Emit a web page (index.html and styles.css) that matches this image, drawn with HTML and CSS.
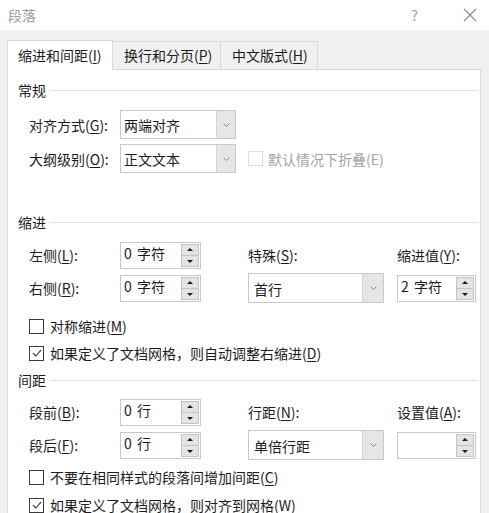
FILE: index.html
```html
<!DOCTYPE html>
<html lang="zh-CN">
<head>
<meta charset="utf-8">
<title>段落</title>
<link rel="stylesheet" href="styles.css">
</head>
<body>
<div class="dialog">
  <div class="titlebar">
    <span class="title">段落</span>
    <span class="help">?</span>
    <span class="close"><svg width="14" height="14" viewBox="0 0 14 14"><path d="M1 1L13 13M13 1L1 13" stroke="#8a8a8a" stroke-width="1.1" fill="none"/></svg></span>
  </div>
  <div class="tabs">
    <div class="tab active">缩进和间距(<u>I</u>)</div>
    <div class="tab t2">换行和分页(<u>P</u>)</div>
    <div class="tab t3">中文版式(<u>H</u>)</div>
  </div>
  <div class="panel">
    <div class="section-head"><span>常规</span><i class="rule"></i></div>
    <div class="row general r1">
      <span class="label">对齐方式(<u>G</u>):</span>
      <div class="select w116"><span class="val">两端对齐</span><span class="drop"><svg width="7" height="4" viewBox="0 0 7 4"><path d="M0.5 0.5L3.5 3.5L6.5 0.5" stroke="#8a8a8a" fill="none"/></svg></span></div>
    </div>
    <div class="row general r2">
      <span class="label">大纲级别(<u>O</u>):</span>
      <div class="select w116"><span class="val">正文文本</span><span class="drop"><svg width="7" height="4" viewBox="0 0 7 4"><path d="M0.5 0.5L3.5 3.5L6.5 0.5" stroke="#8a8a8a" fill="none"/></svg></span></div>
      <span class="check disabled"><span class="box"></span><span>默认情况下折叠(E)</span></span>
    </div>

    <div class="section-head s2"><span>缩进</span><i class="rule"></i></div>
    <div class="grid g1">
      <span class="label">左侧(<u>L</u>):</span>
      <div class="spin"><span class="val">0 字符</span><span class="btns"><span class="up"></span><span class="down"></span></span></div>
      <span></span>
      <span class="label">特殊(<u>S</u>):</span>
      <span></span>
      <span class="label">缩进值(<u>Y</u>):</span>
    </div>
    <div class="grid g2">
      <span class="label">右侧(<u>R</u>):</span>
      <div class="spin"><span class="val">0 字符</span><span class="btns"><span class="up"></span><span class="down"></span></span></div>
      <span></span>
      <div class="select tall"><span class="val">首行</span><span class="drop"><svg width="7" height="4" viewBox="0 0 7 4"><path d="M0.5 0.5L3.5 3.5L6.5 0.5" stroke="#8a8a8a" fill="none"/></svg></span></div>
      <span></span>
      <div class="spin"><span class="val">2 字符</span><span class="btns"><span class="up"></span><span class="down"></span></span></div>
    </div>
    <div class="check c1"><span class="box"></span><span>对称缩进(<u>M</u>)</span></div>
    <div class="check c2"><span class="box"><svg width="12" height="12" viewBox="0 0 12 12"><path d="M2 6.2L4.8 9L10.2 2.8" stroke="#333" stroke-width="1.1" fill="none"/></svg></span><span>如果定义了文档网格，则自动调整右缩进(<u>D</u>)</span></div>

    <div class="section-head s3"><span>间距</span><i class="rule"></i></div>
    <div class="grid g3">
      <span class="label">段前(<u>B</u>):</span>
      <div class="spin"><span class="val">0 行</span><span class="btns"><span class="up"></span><span class="down"></span></span></div>
      <span></span>
      <span class="label">行距(<u>N</u>):</span>
      <span></span>
      <span class="label">设置值(<u>A</u>):</span>
    </div>
    <div class="grid g4">
      <span class="label">段后(<u>F</u>):</span>
      <div class="spin"><span class="val">0 行</span><span class="btns"><span class="up"></span><span class="down"></span></span></div>
      <span></span>
      <div class="select tall"><span class="val">单倍行距</span><span class="drop"><svg width="7" height="4" viewBox="0 0 7 4"><path d="M0.5 0.5L3.5 3.5L6.5 0.5" stroke="#8a8a8a" fill="none"/></svg></span></div>
      <span></span>
      <div class="spin"><span class="val"></span><span class="btns"><span class="up"></span><span class="down"></span></span></div>
    </div>
    <div class="check c3"><span class="box"></span><span>不要在相同样式的段落间增加间距(<u>C</u>)</span></div>
    <div class="check c4"><span class="box"><svg width="12" height="12" viewBox="0 0 12 12"><path d="M2 6.2L4.8 9L10.2 2.8" stroke="#333" stroke-width="1.1" fill="none"/></svg></span><span>如果定义了文档网格，则对齐到网格(<u>W</u>)</span></div>
  </div>
</div>
</body>
</html>
```

FILE: styles.css
```css
* { box-sizing: border-box; }
html, body {
  margin: 0;
  padding: 0;
  width: 489px;
  height: 513px;
  overflow: hidden;
  background: #f0f0f0;
  font-family: "Noto Sans CJK SC", "Noto Sans", sans-serif;
  font-size: 14px;
  color: #1b1b1b;
}
u { text-decoration: underline; text-underline-offset: 2px; text-decoration-thickness: 1px; }

.titlebar {
  height: 30px;
  background: #ffffff;
  display: flex;
  align-items: center;
  padding-left: 8px;
}
.title { color: #9b9b9b; font-size: 14px; line-height: 20px; }
.help { margin-left: auto; color: #a0a0a0; font-size: 14px; margin-right: 45px; line-height: 20px; }
.close { width: 14px; height: 14px; margin-right: 12px; display: flex; }

.tabs {
  display: flex;
  align-items: flex-end;
  padding-left: 7px;
  margin-top: 10px;
  height: 29px;
  position: relative;
  z-index: 1;
}
.tab {
  height: 28px;
  border: 1px solid #d9d9d9;
  border-bottom: none;
  background: #f0f0f0;
  line-height: 27px;
  padding-left: 11px;
  margin-left: -1px;
}
.tab:first-child { margin-left: 0; }
.tab.active {
  height: 30px;
  margin-bottom: -1px;
  background: #ffffff;
  width: 106px;
  line-height: 29px;
  padding-left: 10px;
}
.tab.t2 { width: 109px; }
.tab.t3 { width: 98px; }

.panel {
  margin-left: 7px;
  width: 474px;
  height: 444px;
  background: #ffffff;
  border: 1px solid #d9d9d9;
  border-bottom: none;
  padding: 10px 2px 0 10px;
}

.section-head {
  display: flex;
  align-items: center;
  height: 20px;
  line-height: 20px;
}
.section-head .rule {
  flex: 1;
  height: 1px;
  background: #e3e3e3;
  margin-left: 4px;
}
.section-head.s2 { margin-top: 39px; }
.section-head.s3 { margin-top: 7px; }

.row { display: flex; align-items: center; padding-left: 11px; }
.row.r1 { margin-top: 10px; height: 29px; }
.row.r2 { margin-top: 5px; height: 29px; }
.row.general .label { width: 91px; }

.label { line-height: 20px; white-space: nowrap; }

.select {
  height: 29px;
  border: 1px solid #c8c8c8;
  display: flex;
  align-items: center;
  background: #fff;
  position: relative;
}
.select .val { padding-left: 3px; flex: 1; line-height: 20px; }
.select .drop {
  width: 19px;
  height: 27px;
  background: #e6e6e6;
  border-left: 1px solid #d4d4d4;
  display: flex;
  align-items: center;
  justify-content: center;
}
.select.w116 { width: 116px; }
.select.tall { width: 136px; height: 30px; }
.select.tall .drop { width: 21px; height: 28px; }
.select.tall .val { padding-top: 2px; padding-left: 5px; }

.check { display: flex; align-items: center; height: 20px; line-height: 20px; white-space: nowrap; }
.check .box {
  width: 15px;
  height: 15px;
  border: 1px solid #3a3a3a;
  margin-right: 6px;
  display: flex;
  align-items: center;
  justify-content: center;
  background: #fff;
}
.check.disabled { margin-left: 12px; color: #a3a3a3; }
.check.disabled .box { border-color: #dedede; margin-right: 5px; }

.grid {
  display: grid;
  grid-template-columns: 91px 81px 47px 136px 13px 79px;
  align-items: center;
  padding-left: 11px;
}
.grid.g1 { margin-top: 9px; height: 28px; }
.grid.g2 { margin-top: 4px; height: 30px; }
.grid.g3 { margin-top: 8px; height: 28px; }
.grid.g4 { margin-top: 4px; height: 30px; }

.spin {
  height: 27px;
  border: 1px solid #c8c8c8;
  display: flex;
  background: #fff;
}
.spin .val { flex: 1; padding-left: 3px; line-height: 20px; padding-top: 0; word-spacing: 2px; }
.spin .btns {
  width: 19px;
  display: flex;
  flex-direction: column;
  padding: 1px 1px 1px 0;
}
.spin .up, .spin .down {
  flex: 1;
  background: #e4e4e4;
  border: 1px solid #c4c4c4;
  position: relative;
}
.spin .down { margin-top: -1px; }
.spin .up::after, .spin .down::after {
  content: "";
  position: absolute;
  left: 50%;
  top: 50%;
  margin-left: -3px;
  border-left: 3px solid transparent;
  border-right: 3px solid transparent;
}
.spin .up::after { border-bottom: 3px solid #1a1a1a; margin-top: -2px; }
.spin .down::after { border-top: 3px solid #1a1a1a; margin-top: -1px; }

.check.c1 { margin-top: 13px; padding-left: 11px; }
.check.c2 { margin-top: 7px; padding-left: 11px; }
.check.c3 { margin-top: 7px; padding-left: 11px; }
.check.c4 { margin-top: 11px; padding-left: 11px; height: 14px; line-height: 14px; }
```
